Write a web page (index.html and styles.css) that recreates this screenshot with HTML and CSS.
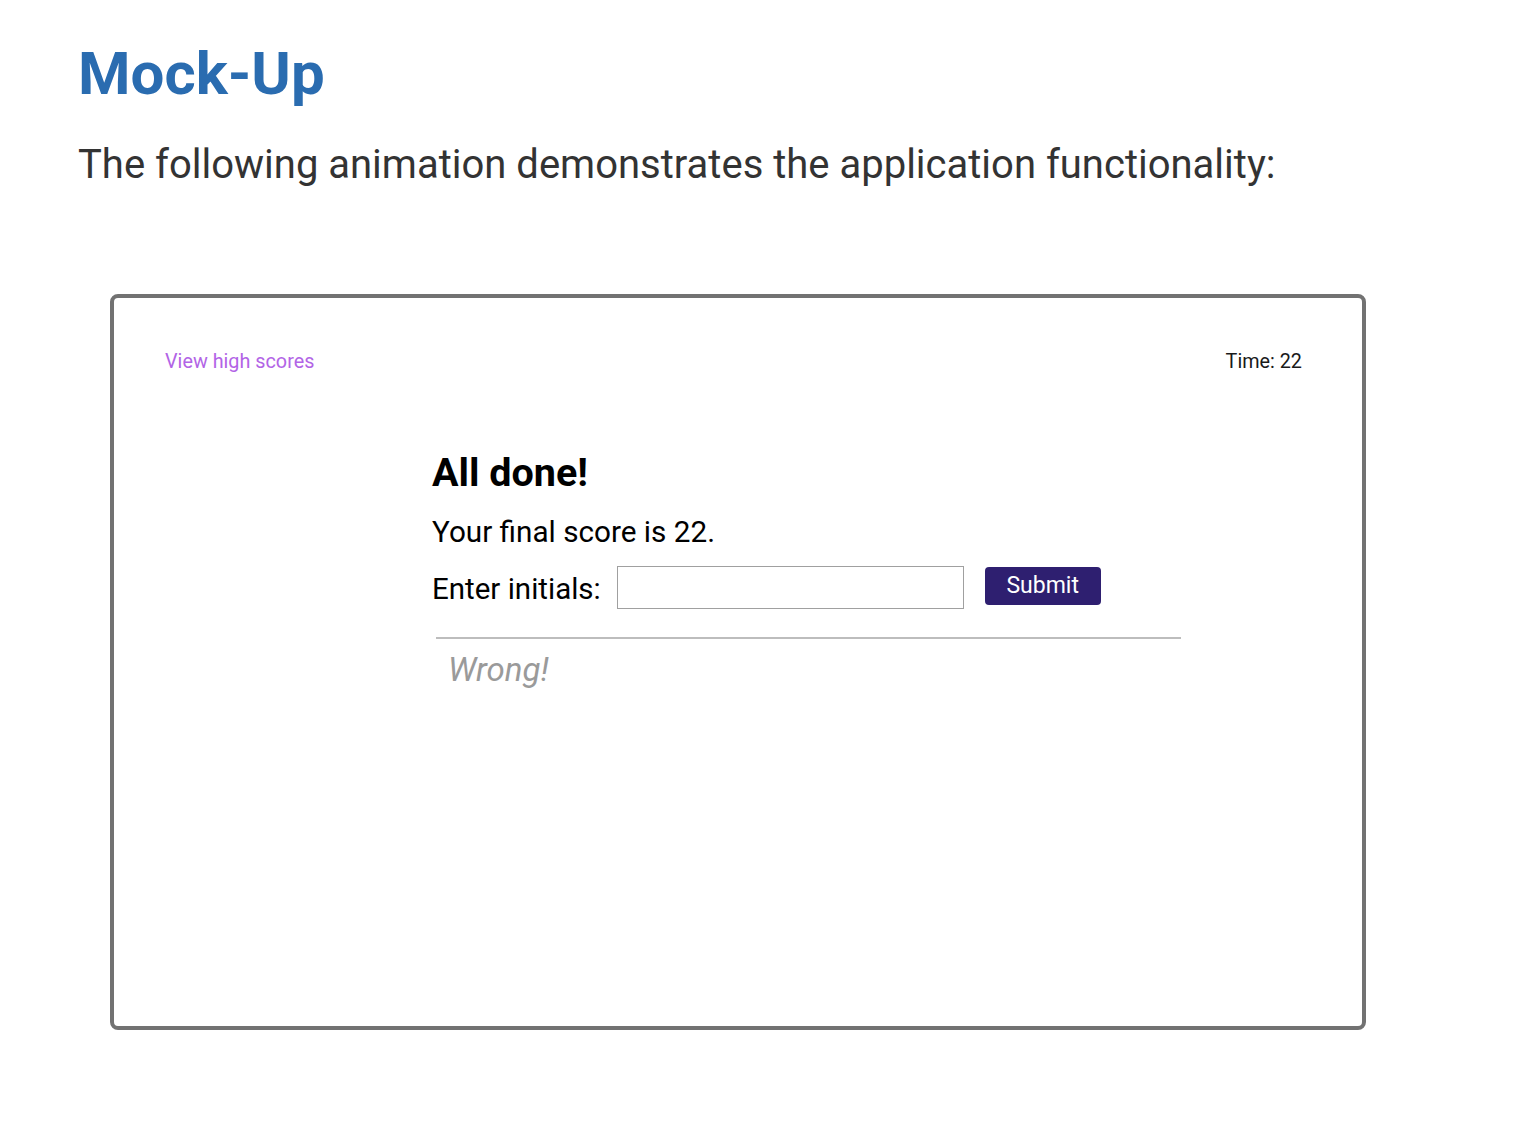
FILE: index.html
```html
<!DOCTYPE html>
<html lang="en">
<head>
<meta charset="utf-8">
<title>Mock-Up</title>
<link rel="stylesheet" href="styles.css">
</head>
<body>
<main class="page">
  <h1 class="title">Mock-Up</h1>
  <p class="lead">The following animation demonstrates the application functionality:</p>
  <div class="frame">
    <header class="app-header">
      <a class="hs-link" href="#">View high scores</a>
      <span class="timer">Time: 22</span>
    </header>
    <section class="done">
      <h2 class="done-title">All done!</h2>
      <p class="score">Your final score is 22.</p>
      <form class="initials-row">
        <label class="initials-label" for="initials">Enter initials:</label>
        <input class="initials-input" id="initials" type="text">
        <button class="submit-btn" type="button">Submit</button>
      </form>
      <hr class="divider">
      <p class="feedback">Wrong!</p>
    </section>
  </div>
</main>
</body>
</html>
```
FILE: styles.css
```css
html, body {
  margin: 0;
  padding: 0;
  background: #fff;
}
body {
  font-family: Roboto, "Liberation Sans", Arial, sans-serif;
}
.page {
  padding: 38px 0 0 78px;
}
.title {
  margin: 0;
  font-size: 60px;
  line-height: 72px;
  font-weight: 700;
  color: #2a6cb0;
}
.lead {
  margin: 31px 0 0 0;
  font-size: 40px;
  line-height: 48px;
  color: #333;
}
.frame {
  box-sizing: border-box;
  margin: 105px 0 0 32px;
  width: 1256px;
  height: 736px;
  border: 4px solid #727272;
  border-radius: 8px;
  padding: 53px 60px 0 51px;
}
.app-header {
  display: flex;
  justify-content: space-between;
  font-size: 19.8px;
  line-height: 22px;
}
.hs-link {
  color: #b264e6;
  text-decoration: none;
}
.timer {
  color: #1a1a1a;
}
.done {
  margin: 76px 0 0 267px;
  color: #000;
}
.done-title {
  margin: 0;
  font-size: 39.5px;
  line-height: 48px;
  font-weight: 700;
}
.score {
  margin: 17px 0 0 0;
  font-size: 29.7px;
  line-height: 36px;
}
.initials-row {
  display: flex;
  align-items: flex-start;
  margin: 16px 0 0 0;
}
.initials-label {
  margin-top: 5px;
  font-size: 29.5px;
  line-height: 36px;
}
.initials-input {
  box-sizing: border-box;
  margin: 0 0 0 16px;
  width: 347px;
  height: 43px;
  border: 1px solid #a0a0a0;
  padding: 0 8px;
  font: inherit;
}
.submit-btn {
  box-sizing: border-box;
  margin: 1px 0 0 21px;
  width: 116px;
  height: 38px;
  border: none;
  border-radius: 4px;
  background: #2e1f70;
  color: #fff;
  font-family: Roboto, "Liberation Sans", Arial, sans-serif;
  font-size: 23px;
  line-height: 38px;
  padding: 0;
}
.divider {
  margin: 28px 0 0 4px;
  width: 745px;
  border: none;
  border-top: 2px solid #bdbdbd;
  height: 0;
}
.feedback {
  margin: 13px 0 0 16px;
  font-size: 33px;
  line-height: 36px;
  font-style: italic;
  color: #9a9a9a;
}
```
